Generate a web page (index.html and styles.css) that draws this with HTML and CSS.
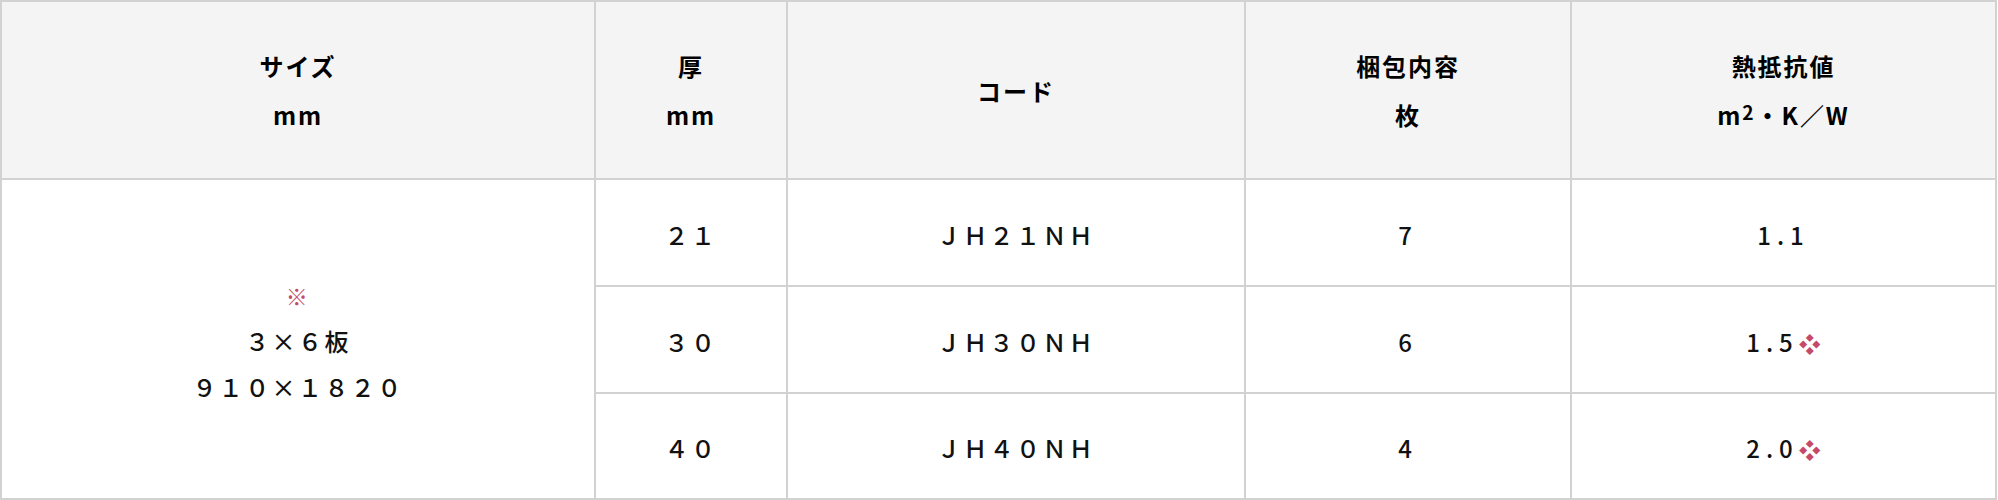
FILE: index.html
```html
<!DOCTYPE html>
<html lang="ja">
<head>
<meta charset="utf-8">
<title>spec</title>
<link rel="stylesheet" href="styles.css">
</head>
<body>
<table class="spec">
  <colgroup>
    <col class="c-size">
    <col class="c-thick">
    <col class="c-code">
    <col class="c-pack">
    <col class="c-res">
  </colgroup>
  <thead>
    <tr class="head">
      <th>サイズ<br>mm</th>
      <th>厚<br>mm</th>
      <th>コード</th>
      <th>梱包内容<br>枚</th>
      <th>熱抵抗値<br>m<span class="sup">2</span>・K／W</th>
    </tr>
  </thead>
  <tbody>
    <tr class="row">
      <td rowspan="3" class="size"><span class="mark">※</span><br>３×６板<br>９１０×１８２０</td>
      <td>２１</td>
      <td>ＪＨ２１ＮＨ</td>
      <td class="num">7</td>
      <td class="num">1.1</td>
    </tr>
    <tr class="row">
      <td>３０</td>
      <td>ＪＨ３０ＮＨ</td>
      <td class="num">6</td>
      <td class="num">1.5<span class="mark dia">❖</span></td>
    </tr>
    <tr class="row last">
      <td>４０</td>
      <td>ＪＨ４０ＮＨ</td>
      <td class="num">4</td>
      <td class="num">2.0<span class="mark dia">❖</span></td>
    </tr>
  </tbody>
</table>
</body>
</html>
```
FILE: styles.css
```css
html, body {
  margin: 0;
  padding: 0;
  background: #ffffff;
}
body {
  font-family: "Noto Sans CJK JP", "Noto Sans", sans-serif;
  color: #111111;
}
.spec {
  width: 1997px;
  table-layout: fixed;
  border-collapse: collapse;
}
.c-size { width: 594px; }
.c-thick { width: 192px; }
.c-code { width: 458px; }
.c-pack { width: 326px; }
.c-res { width: 425px; }

.spec th,
.spec td {
  border: 2px solid #d2d2d2;
  text-align: center;
  vertical-align: middle;
  padding: 0;
}
.head {
  height: 178px;
}
.head th {
  background: #f4f4f4;
  font-size: 24px;
  font-weight: 700;
  line-height: 49px;
  letter-spacing: 0.08em;
  color: #000000;
}
.sup {
  font-size: 0.8em;
  vertical-align: 0.25em;
  line-height: 1;
}
.row {
  height: 107px;
}
.row.last {
  height: 106px;
}
.row td {
  font-size: 24px;
  font-weight: 500;
  line-height: 46px;
  letter-spacing: 0.1em;
  color: #111111;
  padding-top: 4px;
}
.row td.num {
  letter-spacing: 0.25em;
}
.mark {
  color: #c44a68;
  font-size: 22px;
}
.dia {
  letter-spacing: 0;
  font-size: 22px;
}
```
